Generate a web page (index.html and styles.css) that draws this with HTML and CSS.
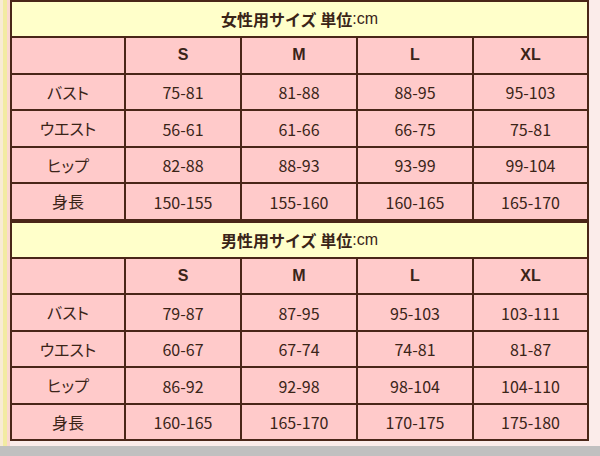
FILE: index.html
```html
<!DOCTYPE html>
<html lang="ja">
<head>
<meta charset="utf-8">
<link rel="stylesheet" href="styles.css">
</head>
<body>
<div class="page">
  <div class="size-table">
    <div class="cell title"><b>女性用サイズ 単位</b><span class="unit">:cm</span></div>
    <div class="cell"></div>
    <div class="cell head">S</div>
    <div class="cell head">M</div>
    <div class="cell head">L</div>
    <div class="cell head">XL</div>
    <div class="cell label">バスト</div>
    <div class="cell num">75-81</div>
    <div class="cell num">81-88</div>
    <div class="cell num">88-95</div>
    <div class="cell num">95-103</div>
    <div class="cell label">ウエスト</div>
    <div class="cell num">56-61</div>
    <div class="cell num">61-66</div>
    <div class="cell num">66-75</div>
    <div class="cell num">75-81</div>
    <div class="cell label">ヒップ</div>
    <div class="cell num">82-88</div>
    <div class="cell num">88-93</div>
    <div class="cell num">93-99</div>
    <div class="cell num">99-104</div>
    <div class="cell label">身長</div>
    <div class="cell num">150-155</div>
    <div class="cell num">155-160</div>
    <div class="cell num">160-165</div>
    <div class="cell num">165-170</div>
  </div>
  <div class="size-table">
    <div class="cell title"><b>男性用サイズ 単位</b><span class="unit">:cm</span></div>
    <div class="cell"></div>
    <div class="cell head">S</div>
    <div class="cell head">M</div>
    <div class="cell head">L</div>
    <div class="cell head">XL</div>
    <div class="cell label">バスト</div>
    <div class="cell num">79-87</div>
    <div class="cell num">87-95</div>
    <div class="cell num">95-103</div>
    <div class="cell num">103-111</div>
    <div class="cell label">ウエスト</div>
    <div class="cell num">60-67</div>
    <div class="cell num">67-74</div>
    <div class="cell num">74-81</div>
    <div class="cell num">81-87</div>
    <div class="cell label">ヒップ</div>
    <div class="cell num">86-92</div>
    <div class="cell num">92-98</div>
    <div class="cell num">98-104</div>
    <div class="cell num">104-110</div>
    <div class="cell label">身長</div>
    <div class="cell num">160-165</div>
    <div class="cell num">165-170</div>
    <div class="cell num">170-175</div>
    <div class="cell num">175-180</div>
  </div>
</div>
<div class="footer"></div>
</body>
</html>
```

FILE: styles.css
```css
html, body {
  margin: 0;
  padding: 0;
}
body {
  width: 600px;
  height: 456px;
  overflow: hidden;
  background: #fbecea;
  font-family: "Noto Sans CJK JP", "Liberation Sans", sans-serif;
  color: #3a2418;
}
.page {
  height: 446px;
  padding-left: 10px;
  background: linear-gradient(to right, #f8ecd4 0 3px, #f2eba2 3px 7px, #fbd9d0 7px 10px, transparent 10px);
  box-sizing: border-box;
}
.size-table {
  display: grid;
  width: 579px;
  grid-template-columns: 112px 114px 114px 114px 113px;
  grid-template-rows: 34px repeat(5, 34.5px);
  gap: 2px;
  padding: 2px;
  box-sizing: border-box;
  background: #4a2618;
}
.cell {
  background: #ffcaca;
  display: flex;
  align-items: center;
  justify-content: center;
  font-size: 16px;
  line-height: 1;
}
.title {
  grid-column: 1 / -1;
  background: #ffffca;
  font-size: 16px;
}
.title b {
  font-weight: 700;
}
.unit {
  font-family: "Liberation Sans", sans-serif;
  font-size: 16px;
  font-weight: 400;
}
.head {
  font-family: "Liberation Sans", sans-serif;
  font-weight: 700;
  font-size: 16px;
}
.label {
  font-feature-settings: "palt";
}
.num {
  padding-top: 1px;
}
.footer {
  height: 10px;
  background: #c0c0c0;
}
```
